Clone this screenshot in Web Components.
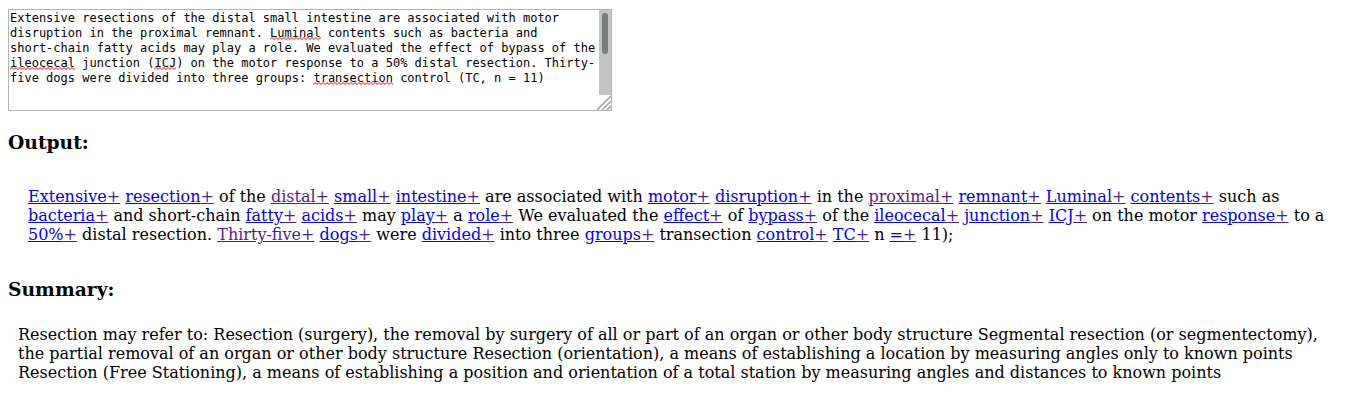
<!DOCTYPE html>
<html lang="en">
<head>
<meta charset="utf-8">
<title>Text linker</title>
<style>
  body { margin: 8px; background: #fff; color: #000; font: 16px/19px "DejaVu Serif", serif; }
</style>
</head>
<body>
<linker-page></linker-page>

<template id="linker-page">
  <style>
    :host { display: block; }
  </style>
  <source-box></source-box>
  <result-section heading="Output:" style="--gap: 34px; --indent: 20px; --end: 0px">
    <term-link>Extensive</term-link> <term-link>resection</term-link> of the <term-link visited>distal</term-link> <term-link>small</term-link> <term-link>intestine</term-link> are associated with <term-link>motor</term-link> <term-link>disruption</term-link> in the <term-link visited>proximal</term-link> <term-link>remnant</term-link> <term-link>Luminal</term-link> <term-link>contents</term-link> such as <term-link>bacteria</term-link> and short-chain <term-link>fatty</term-link> <term-link>acids</term-link> may <term-link>play</term-link> a <term-link>role</term-link> We evaluated the <term-link>effect</term-link> of <term-link>bypass</term-link> of the <term-link>ileocecal</term-link> <term-link>junction</term-link> <term-link>ICJ</term-link> on the motor <term-link>response</term-link> to a <term-link>50%</term-link> distal resection. <term-link visited>Thirty-five</term-link> <term-link>dogs</term-link> were <term-link>divided</term-link> into three <term-link>groups</term-link> transection <term-link>control</term-link> <term-link>TC</term-link> n <term-link>=</term-link> 11);
  </result-section>
  <result-section heading="Summary:" style="--top: 34px; --gap: 25px; --indent: 10px; --end: 10px">Resection may refer to: Resection (surgery), the removal by surgery of all or part of an organ or other body structure Segmental resection (or segmentectomy), the partial removal of an organ or other body structure Resection (orientation), a means of establishing a location by measuring angles only to known points Resection (Free Stationing), a means of establishing a position and orientation of a total station by measuring angles and distances to known points</result-section>
</template>

<template id="source-box">
  <style>
    :host { display: block; padding-top: 1px; }
    .frame {
      position: relative; box-sizing: border-box; width: 604px; max-width: 100%;
      border: 1px solid #b4b4b4; background: #fff;
      font: 12px/15px "DejaVu Sans Mono", monospace;
    }
    textarea {
      display: block; box-sizing: border-box; width: 100%; height: 100px; margin: 0;
      padding: 1px 12px 1px 1px; border: 0; outline: 0; background: none; color: #000;
      font: inherit; resize: none; overflow: hidden; white-space: pre;
    }
    .marks { position: absolute; inset: 1px 12px 1px 1px; pointer-events: none; }
    .marks i {
      position: absolute; height: 3px; overflow: hidden;
      left: calc(var(--col) * 1ch); width: calc(var(--len) * 1ch);
      top: calc(var(--row) * 15px - 4px);
    }
    .marks svg { display: block; width: 100%; height: 3px; }
    .bar { position: absolute; top: 0; right: 0; bottom: 15px; width: 12px; background: #c2c4c3; }
    .bar::after {
      content: ""; position: absolute; top: 3px; left: 3px; width: 6px; height: 41px;
      border-radius: 3px; background: #7a7e7d;
    }
    .grip { position: absolute; right: 0; bottom: 0; width: 14px; height: 14px; }
  </style>
  <div class="frame">
    <textarea aria-label="Source text" spellcheck="false">Extensive resections of the distal small intestine are associated with motor
disruption in the proximal remnant. Luminal contents such as bacteria and
short-chain fatty acids may play a role. We evaluated the effect of bypass of the
ileocecal junction (ICJ) on the motor response to a 50% distal resection. Thirty-
five dogs were divided into three groups: transection control (TC, n = 11)</textarea>
    <div class="marks" aria-hidden="true">
      <i style="--row: 2; --col: 36; --len: 7"></i>
      <i style="--row: 4; --col: 0; --len: 9"></i>
      <i style="--row: 4; --col: 20; --len: 3"></i>
      <i style="--row: 5; --col: 42; --len: 11"></i>
    </div>
    <div class="bar"></div>
    <svg class="grip" viewBox="0 0 14 14" aria-hidden="true"><path d="M0 14 14 0M5 14 14 5M10 14 14 10" fill="none" stroke="#aaa" stroke-width="1.7"/></svg>
  </div>
</template>

<template id="result-section">
  <style>
    :host { display: block; }
    h3 { margin: var(--top, 20px) 0 var(--gap); line-height: 22px; }
    p { margin: 0; padding: 0 var(--end) 0 var(--indent); }
  </style>
  <h3></h3>
  <p><slot></slot></p>
</template>

<template id="term-link">
  <style>
    :host { display: inline; }
    a { color: #0000ee; text-decoration: underline; }
    :host([visited]) a, a.more { color: #551a8b; }
  </style><a href="#term"><slot></slot></a><a class="more" href="#more">+</a></template>

<script>
  class TemplateElement extends HTMLElement {
    constructor() {
      super();
      this.attachShadow({ mode: "open" })
        .append(document.getElementById(this.localName).content.cloneNode(true));
    }
  }

  customElements.define("term-link", class extends TemplateElement {});

  customElements.define("result-section", class extends TemplateElement {
    connectedCallback() {
      this.shadowRoot.querySelector("h3").textContent = this.getAttribute("heading");
    }
  });

  customElements.define("source-box", class extends TemplateElement {
    connectedCallback() {
      // A spelling mark is a zigzag, one pixel thick, with a period of four pixels.
      let d = "M0 2.5";
      for (let x = 2; x <= 120; x += 2) d += ` L${x} ${x % 4 ? 0.5 : 2.5}`;
      for (const mark of this.shadowRoot.querySelectorAll("i")) {
        mark.innerHTML = `<svg><path d="${d}" fill="none" stroke="#f00000"/></svg>`;
      }
    }
  });

  customElements.define("linker-page", class extends TemplateElement {});
</script>
</body>
</html>
